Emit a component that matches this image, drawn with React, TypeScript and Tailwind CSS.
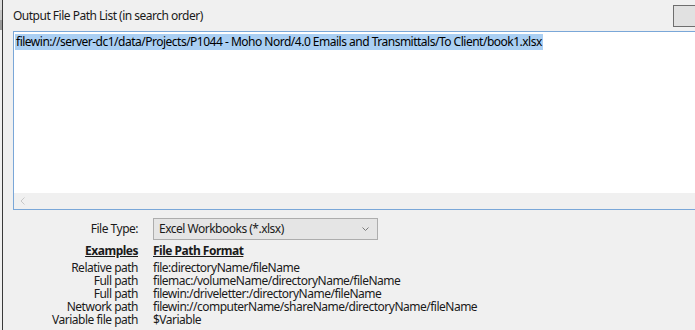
import React from 'react';

// --- Examples table data ---

const EXAMPLES: { label: string; format: string }[] = [
  { label: 'Relative path', format: 'file:directoryName/fileName' },
  { label: 'Full path', format: 'filemac:/volumeName/directoryName/fileName' },
  { label: 'Full path', format: 'filewin:/driveletter:/directoryName/fileName' },
  { label: 'Network path', format: 'filewin://computerName/shareName/directoryName/fileName' },
  { label: 'Variable file path', format: '$Variable' },
];

const OUTPUT_PATH =
  'filewin://server-dc1/data/Projects/P1044 - Moho Nord/4.0 Emails and Transmittals/To Client/book1.xlsx';

function ChevronSmall() {
  return (
    <svg width="7" height="5" viewBox="0 0 7 5" className="shrink-0">
      <polyline points="0.5,0.5 3.5,3.5 6.5,0.5" fill="none" stroke="#7a7a7a" strokeWidth="1" />
    </svg>
  );
}

function OutputList() {
  return (
    <div className="flex flex-col w-[700px] h-[179px] border border-r-0 border-[#7aa7d8] bg-white">
      <div className="flex-1 pt-px pl-px">
        <span className="inline-block bg-[#aacff3] text-black leading-[16px] pl-px pr-px">{OUTPUT_PATH}</span>
      </div>
      <div className="h-[16px] bg-[#f0f0f0] flex items-center pl-[6px]">
        <svg width="6" height="8" viewBox="0 0 6 8">
          <polyline points="4.5,0.5 1,4 4.5,7.5" fill="none" stroke="#c8c8c8" strokeWidth="1" />
        </svg>
      </div>
    </div>
  );
}

export default function App() {
  return (
    <div
      className="w-[695px] h-[330px] bg-[#f0f0f0] flex overflow-hidden text-[12px] tracking-[-0.5px] text-black"
      style={{ fontFamily: '"Noto Sans", "Open Sans", sans-serif' }}
    >
      {/* window edge */}
      <div className="w-[2px] flex flex-col">
        <div className="h-[10px] bg-[#dcdcdc]" />
        <div className="h-[10px] bg-[#c4c4c4]" />
        <div className="h-[10px] bg-[#9a9a9a]" />
        <div className="flex-1" />
      </div>
      <div className="w-px bg-[#3a3a3a]" />

      <div className="flex-1 flex flex-col pl-[10px] min-w-0">
        {/* header */}
        <div className="h-[31px] flex justify-between">
          <span className="mt-[8px] leading-[16px] text-[#1a1a1a]">Output File Path List (in search order)</span>
          <div className="mt-[5px] w-[30px] h-[22px] mr-[-8px] border border-[#6e6e6e] bg-[#e1e1e1] flex items-center justify-end shrink-0">
            <svg width="6" height="10" viewBox="0 0 6 10">
              <rect x="1" y="3" width="2" height="5" fill="#d58a1e" />
              <rect x="3" y="2" width="2" height="6" fill="#3a6fc0" />
            </svg>
          </div>
        </div>

        <OutputList />

        {/* file type + examples */}
        <div className="grid grid-cols-[125px_1fr] gap-x-[15px] text-[#1a1a1a]">
          <span className="text-right mt-[12px] leading-[14px]">File Type:</span>
          <div className="mt-[8px] w-[225px] h-[22px] border border-[#adadad] bg-[#e5e5e5] flex items-center justify-between pl-[5px] pr-[8px]">
            <span className="leading-[14px]">Excel Workbooks (*.xlsx)</span>
            <ChevronSmall />
          </div>

          <span className="text-right font-bold underline mt-[4px] mb-[4px] leading-[13px]">Examples</span>
          <span className="font-bold underline mt-[4px] mb-[4px] leading-[13px]">File Path Format</span>

          {EXAMPLES.map((ex, i) => (
            <React.Fragment key={i}>
              <span className="text-right leading-[13px]">{ex.label}</span>
              <span className="leading-[13px] whitespace-nowrap">{ex.format}</span>
            </React.Fragment>
          ))}
        </div>
      </div>
    </div>
  );
}
